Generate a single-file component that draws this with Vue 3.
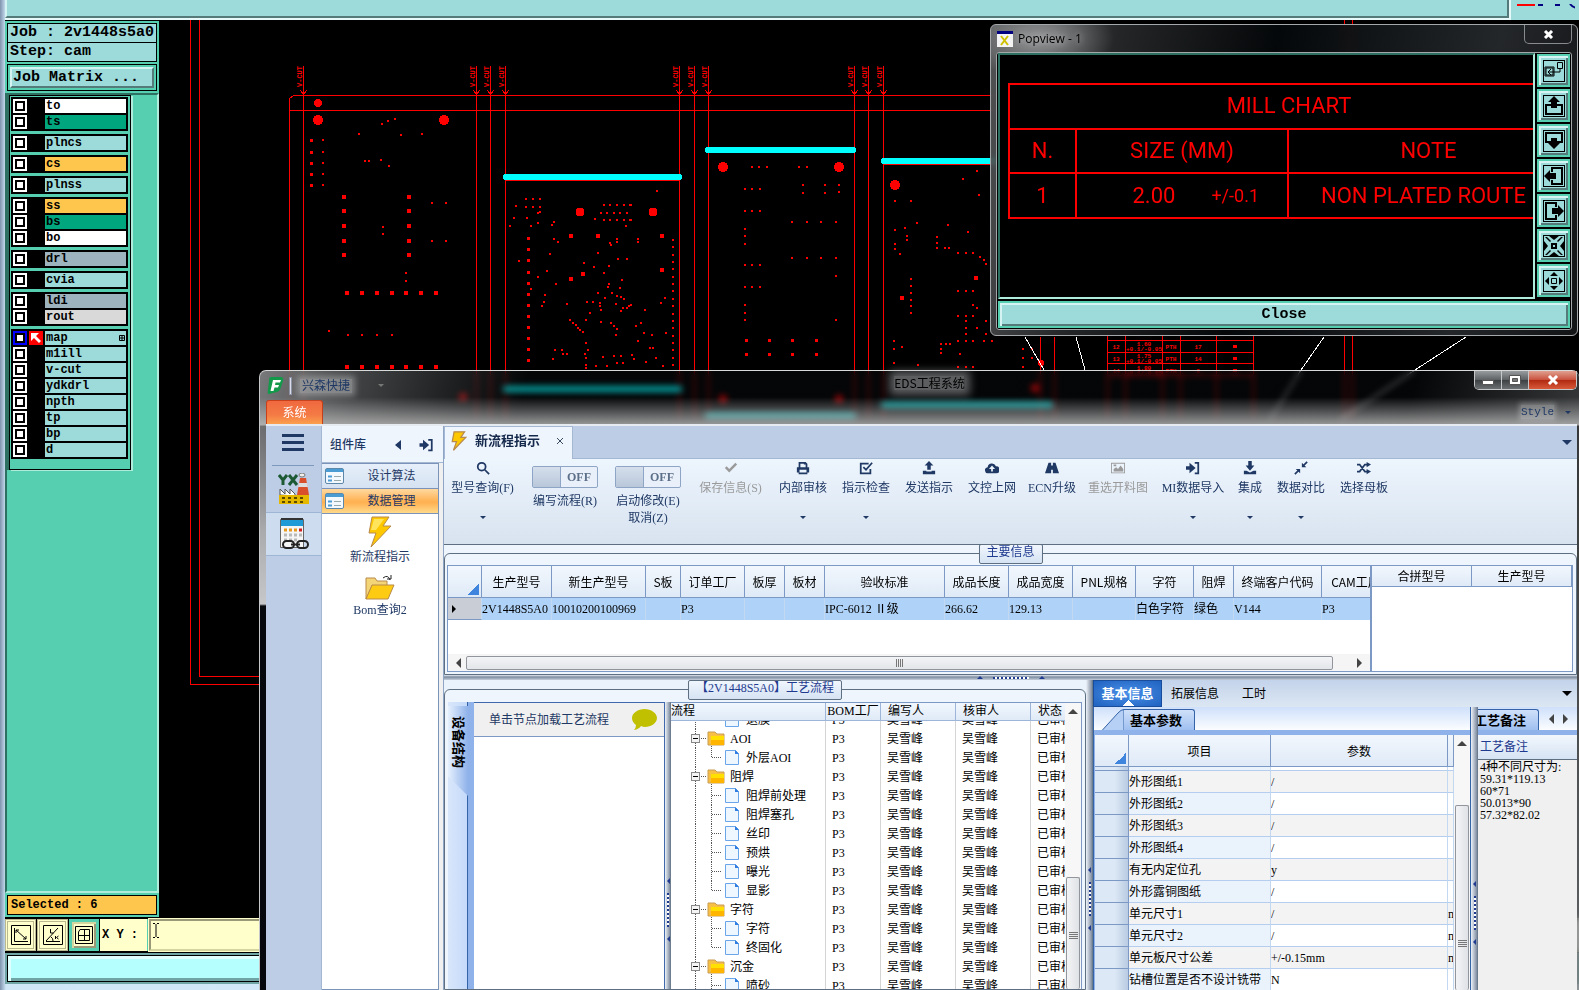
<template>
  <div class="desktop">
    <!-- CAM 主程序 -->
    <div class="cam">
      <div class="camTop">
        <div class="camTopBar"></div>
        <div class="camLogo">
          <svg width="64" height="8">
            <path d="M6 0h18v2H6z" fill="#f00" />
            <path d="M27 0h5v2h-5zM44 0h5v2h-5z" fill="#000080" />
            <path d="M59 0q3 4 9 4" fill="none" stroke="#000080" stroke-width="2" />
          </svg>
        </div>
      </div>

      <div class="camMain">
        <div class="side">
          <div class="sideHead">
            <div class="infoBox">Job : 2v1448s5a0</div>
            <div class="infoBox">Step: cam</div>
            <div class="matrixBox"><button>Job Matrix ...</button></div>
          </div>
          <div class="sideBody">
            <div class="layerPanel">
              <div class="layerGroup" v-for="(group, gi) in layers" :key="gi">
                <div class="layerRow" v-for="item in group" :key="item.name">
                  <input
                    type="checkbox"
                    :id="'layer-' + item.name"
                    :class="{ active: item.active }"
                    v-model="item.show"
                  />
                  <span class="layerMark">
                    <svg v-if="item.active" width="14" height="14">
                      <rect width="14" height="14" fill="#f00" />
                      <path d="M2 2h8l-3 3 5 5-2 2-5-5-3 3z" fill="#fff" />
                    </svg>
                  </span>
                  <label :for="'layer-' + item.name" :class="item.color">
                    {{ item.name }}
                    <svg v-if="item.active" width="6" height="6">
                      <path d="M.5 .5h5v5h-5zM3 0v6M0 3h6" fill="none" stroke="#000" />
                    </svg>
                  </label>
                </div>
              </div>
            </div>
          </div>
          <div class="selected"><div>Selected : 6</div></div>
        </div>

        <!-- 拼板图形 -->
        <div class="canvas">
          <svg class="pcb" shape-rendering="crispEdges">
            <g transform="translate(-159 -20)">
              <g fill="none" stroke="#f00">
                <path d="M190.500 20V684.500H1000M199.500 20V676.500H1000" />
                <path d="M289.500 420V98.500L293.500 95.500H1000M289.500 110.500H1000" />
                <path d="M505 180.500H680M708 152.500H855M883 164.500H1052" />
                <path v-for="x in cutLines" :key="x" :d="`M${x}.5 66V420M${x - 3}.5 90l3 5 3-5`" />
                <path d="M1040.500 337V420M1054.500 337V420M1344.500 20V420M1352.500 20V420" />
                <path d="M1107.500 325V420M1125.500 325V420M1162.500 325V420M1180.500 325V420M1216.500 325V420M1253.500 325V420" />
                <path d="M1107 340.500h147M1107 352.500h147M1107 363.500h147M1107 375.500h147" />
              </g>
              <g class="cutText">
                <text v-for="x in cutLines" :key="x" :transform="`translate(${x - 1} 87) rotate(-90)`">V-CUT</text>
              </g>
              <g class="drillText">
                <template v-for="(row, i) in drillRows" :key="i">
                  <text :x="1116" :y="349 + i * 12">{{ row[0] }}</text>
                  <text :x="1144" :y="346 + i * 12">{{ row[1] }}</text>
                  <text :x="1144" :y="351 + i * 12">+0.1/-0.05</text>
                  <text :x="1171" :y="349 + i * 12">PTH</text>
                  <text :x="1198" :y="349 + i * 12">{{ row[2] }}</text>
                  <rect :x="1233" :y="345 + i * 12" width="4" height="3" />
                </template>
              </g>
              <g stroke="#0ff" stroke-linecap="round">
                <path d="M506 177H679M708 150H853M884 161H1050" stroke-width="6" />
                <path d="M506 389H679M708 416H853M884 405H1050" stroke-width="6" />
              </g>
              <g fill="#f00">
                <circle v-for="(c, i) in bigPads" :key="'b' + i" :cx="c[0]" :cy="c[1]" :r="c[2]" />
                <path :d="midPath" />
                <path :d="smallPath" />
              </g>
              <path
                d="M1025 337L1044 370M1076 337L1085 370M1324 337L1301 370L1270 420M1466 337L1415 370L1340 420"
                fill="none"
                stroke="#fff"
              />
            </g>
          </svg>
        </div>
      </div>

      <div class="camTools">
        <button class="camTool">
          <svg width="20" height="20" fill="none" stroke="#000">
            <path d="M.5 .5h19v19H.5zM3.500 3v13.500H17M5 5l10 9M5 8V5h3M15 11v3h-3" />
          </svg>
        </button>
        <button class="camTool">
          <svg width="20" height="20" fill="none" stroke="#000">
            <path d="M.5 .5h19v19H.5zM3 16.500h14M3 16L15 3M7.500 4v4h3M8 12q2 1 2 4M12.500 11v3M15.500 11l-2 1.500 2 1.500" />
          </svg>
        </button>
        <button class="camTool on">
          <svg width="18" height="18" fill="none" stroke="#000">
            <path d="M.5 .5h17v17H.5zM5 3.500h9.500v11h-11V6zM9.500 3v12M3 9.500h12" />
          </svg>
        </button>
        <label class="xyLabel" for="xy">X Y :</label>
        <div class="xyBox">
          <input id="xy" type="text" />
          <svg width="6" height="16"><path d="M0 .5h2M4 .5h2M0 14.500h2M4 14.500h2M3 1v13" stroke="#000" /></svg>
        </div>
      </div>
      <div class="camMsg"><div></div></div>
    </div>

    <!-- Popview 窗口 -->
    <div class="popview">
      <div class="popTitle">
        <svg width="16" height="16">
          <rect width="16" height="16" fill="#f4f4f4" />
          <rect width="16" height="3" fill="#000080" />
          <path d="M4 5l7 9M11 5l-7 9" stroke="#cfc000" stroke-width="2" />
        </svg>
        <span>Popview - 1</span>
        <button aria-label="Close window">
          <svg width="11" height="9"><path d="M2 1l7 7M9 1L2 8" stroke="#fff" stroke-width="3" /></svg>
        </button>
      </div>
      <div class="popBody">
        <div class="popMain">
          <div class="popCanvas">
            <table>
              <colgroup><col class="cNo" /><col class="cSize" /><col /></colgroup>
              <tbody>
                <tr><th colspan="3">MILL CHART</th></tr>
                <tr><th>N.</th><th>SIZE (MM)</th><th>NOTE</th></tr>
                <tr>
                  <td>1</td>
                  <td><div class="sizeCell">2.00<small>+/-0.1</small></div></td>
                  <td class="note">NON PLATED ROUTE</td>
                </tr>
              </tbody>
            </table>
          </div>
          <div class="popTools">
            <button v-for="(ico, i) in popIcons" :key="i" :aria-label="ico.name">
              <svg width="22" height="22" viewBox="0 0 22 22">
                <rect x=".5" y=".5" width="21" height="21" fill="none" stroke="#000" />
                <path :d="ico.line" fill="none" stroke="#000" :stroke-width="ico.w" />
                <path :d="ico.fill" />
              </svg>
            </button>
          </div>
        </div>
        <button class="popClose">Close</button>
      </div>
    </div>

    <!-- EDS 工程系统 -->
    <div class="eds">
      <div class="edsTitle">
        <svg class="edsLogo" width="18" height="18">
          <path d="M4 0h10q3 0 2 4l-2 6q-1 4-4 5l-8 2q-2 0-1-4l1-9q0-4 2-4z" fill="#12994a" />
          <path d="M6 3h8l-1 2.500H8.500L8 8h4l-1 2.500H7.500L6.500 14H3.500z" fill="#fff" />
        </svg>
        <i class="titleLine"></i>
        <span class="company">兴森快捷</span>
        <i class="caret dim"></i>
        <span class="edsName">EDS工程系统</span>
        <div class="winBtns">
          <button aria-label="最小化"><svg width="12" height="10"><path d="M.5 5.500h11v4H.5z" fill="#fff" stroke="#555" /></svg></button>
          <button aria-label="最大化">
            <svg width="12" height="10"><path d="M.5 .5h11v9H.5z" fill="#fff" stroke="#555" /><path d="M3.500 3.500h5v3h-5z" fill="#777" stroke="#555" /></svg>
          </button>
          <button class="red" aria-label="关闭"><svg width="12" height="10"><path d="M2 1l8 8M10 1L2 9" stroke="#fff" stroke-width="3" /></svg></button>
        </div>
      </div>
      <div class="ribbonTabs">
        <button class="sysTab">系统</button>
        <span class="styleBtn"><span>Style</span><i class="caret"></i></span>
      </div>

      <div class="edsBody">
        <div class="rail">
          <button class="menuBtn" aria-label="菜单"><i></i><i></i><i></i></button>
          <button class="railBtn" aria-label="工厂">
            <svg width="32" height="32" viewBox="0 0 32 32">
              <path d="M1 2l4 5v5M9 2L5 7M11 2l8 10M19 2l-8 10" fill="none" stroke="#1d5a34" stroke-width="3" />
              <path d="M22 5h6l3 17H19z" fill="#d94f2b" />
              <path d="M21 10h8l1 4H20z" fill="#ddd" />
              <ellipse cx="24" cy="2" rx="3" ry="2" fill="#eee" stroke="#777" />
              <path d="M2 22v-6l5 5v-5l5 5v-5l5 5v2z" fill="#fff" stroke="#555" />
              <path d="M1 22h30v9H1z" fill="#e5b800" />
              <path d="M4 25h3M10 25h3M16 25h3M22 25h3M4 29h3M10 29h3M16 29h3M22 29h3" stroke="#5d4a00" stroke-width="2" />
            </svg>
          </button>
          <button class="railBtn light" aria-label="计算器">
            <svg width="30" height="32" viewBox="0 0 30 32">
              <path d="M1.500 1.500h23v28h-23z" fill="#f5f5f5" stroke="#666" />
              <path d="M2 2h22v6H2z" fill="#1f9ad6" /><path d="M2 1h22" stroke="#333" stroke-width="2" />
              <path d="M5 12h3M10 12h3M15 12h3" stroke="#e89a20" stroke-width="3" />
              <path d="M20 12h3" stroke="#d02020" stroke-width="3" />
              <path d="M5 17h3M10 17h3M15 17h3M20 17h3M5 22h3M10 22h3M15 22h3" stroke="#b9b9b9" stroke-width="3" />
              <g fill="none" stroke="#222" stroke-width="2">
                <rect x="4" y="23" width="11" height="7" rx="3.500" /><rect x="18" y="23" width="11" height="7" rx="3.500" /><path d="M12 26.500h9" />
              </g>
            </svg>
          </button>
        </div>

        <div class="lib">
          <div class="libHead">
            <span>组件库</span>
            <svg width="6" height="10"><path d="M6 0v10L0 5z" /></svg>
            <svg width="15" height="14" viewBox="0 0 16 16"><path :d="icons.signin.fill" /><path :d="icons.signin.line" fill="none" stroke="#1f3864" stroke-width="2" /></svg>
          </div>
          <div class="libList">
            <button class="libCate" v-for="c in cates" :key="c.name" :class="{ cur: c.cur }">
              <svg width="20" height="17">
                <rect x=".5" y=".5" width="18" height="15" rx="1.500" fill="#f4f9ff" stroke="#5d87a8" />
                <path d="M1 2.500h17" stroke="#4b9cd3" stroke-width="3" />
                <path d="M3 8.500h4M3 12.500h4" stroke="#4b9cd3" stroke-width="2" /><path d="M9 8.500h7M9 12.500h7" stroke="#9aa" />
              </svg>
              <span>{{ c.name }}</span>
            </button>
            <button class="libItem">
              <svg width="26" height="32" viewBox="0 0 26 32">
                <path d="M5 1h17l-6 9h8L4 31l5-14H2z" fill="#fdc800" stroke="#b98a4a" />
                <path d="M7 3h10l-8 11H4z" fill="#ffe45c" />
              </svg>
              <span>新流程指示</span>
            </button>
            <button class="libItem">
              <svg width="30" height="26" viewBox="0 0 30 26">
                <path d="M1 24V3h9l2 3h10v5H7z" fill="#f3d476" stroke="#b98a4a" />
                <path d="M7 10h22l-6 14H1z" fill="#fccb12" stroke="#b98a4a" />
                <path d="M18 3q5-4 7 2M22 4h4V0" fill="none" stroke="#222" />
              </svg>
              <span>Bom查询2</span>
            </button>
          </div>
        </div>

        <div class="work">
          <div class="docTabs">
            <div class="docTab">
              <svg width="16" height="20" viewBox="0 0 26 32"><path d="M5 1h17l-6 9h8L4 31l5-14H2z" fill="#fdc800" stroke="#b98a4a" stroke-width="2" /></svg>
              <b>新流程指示</b>
              <button aria-label="关闭标签"><svg width="8" height="8"><path d="M1 1l6 6M7 1L1 7" stroke="#3b4a63" /></svg></button>
            </div>
            <i class="caret big"></i>
          </div>

          <div class="toolbar">
            <template v-for="t in tools" :key="t.text">
              <div v-if="t.toggle" class="switchBox">
                <button class="switch"><i></i><b>OFF</b></button>
                <span>{{ t.text }}</span>
                <span v-if="t.sub">{{ t.sub }}</span>
              </div>
              <button v-else class="tool" :class="[t.size, { off: t.off }]">
                <svg width="14" height="14" viewBox="0 0 16 16">
                  <path :d="icons[t.icon].fill" fill-rule="evenodd" />
                  <path :d="icons[t.icon].line" class="line" />
                </svg>
                <span>{{ t.text }}</span>
                <i v-if="t.drop" class="caret"></i>
              </button>
            </template>
          </div>

          <!-- 主要信息 -->
          <div class="group topGroup">
            <div class="caption">主要信息</div>
            <div class="mainGrid">
              <div class="gridClip">
                <table class="grid">
                  <colgroup>
                    <col class="cMark" />
                    <col v-for="c in mainCols" :key="c.name" :style="{ width: c.width + 'px' }" />
                  </colgroup>
                  <thead>
                    <tr>
                      <th class="corner"></th>
                      <th v-for="c in mainCols" :key="c.name">{{ c.name }}</th>
                    </tr>
                  </thead>
                  <tbody>
                    <tr>
                      <td class="mark"><i></i></td>
                      <td v-for="c in mainCols" :key="c.name">{{ c.value }}</td>
                    </tr>
                  </tbody>
                </table>
              </div>
              <div class="hScroll">
                <i class="arrow left"></i>
                <div class="thumb"><i></i></div>
                <i class="arrow right"></i>
              </div>
            </div>
            <div class="mergeGrid">
              <table class="grid small">
                <thead><tr><th>合拼型号</th><th>生产型号</th></tr></thead>
              </table>
            </div>
          </div>

          <div class="hSplit"><i class="up"></i><i class="grip"></i><i class="up"></i></div>

          <div class="lower">
            <!-- 工艺流程 -->
            <div class="group flowGroup">
              <div class="caption">【2V1448S5A0】工艺流程</div>
              <div class="sideTab"><span>设备结构</span></div>
              <div class="nodePanel">
                <div class="nodeHead">
                  <span>单击节点加载工艺流程</span>
                  <svg width="25" height="21">
                    <path d="M12.500 0C19 0 25 4 25 9s-6 9-12 9q-2 0-4-1-2 3-7 4 2-2 2-5Q0 13 0 9c0-5 6-9 12.500-9z" fill="#c0c000" />
                  </svg>
                </div>
              </div>
              <div class="vSplit thin"><i class="lt"></i><i class="vgrip"></i><i class="lt"></i></div>
              <div class="treeBox">
                <div class="treeMain">
                  <table class="tree treeTop">
                    <colgroup><col class="t1" /><col class="t2" /><col class="t3" /><col class="t3" /><col /></colgroup>
                    <thead><tr><th>流程</th><th>BOM工厂</th><th>编写人</th><th>核审人</th><th>状态</th></tr></thead>
                  </table>
                  <div class="treeClip">
                    <table class="tree treeRows">
                      <colgroup><col class="t1" /><col class="t2" /><col class="t3" /><col class="t3" /><col /></colgroup>
                      <tbody>
                        <tr v-for="(n, i) in nodes" :key="i">
                          <td>
                            <div class="node">
                              <svg v-if="n.dir" width="56" height="19">
                                <path d="M24.500 0V19M30 9.500h5" class="dot" />
                                <path d="M40.500 17v2" class="dot" />
                                <rect x="20.500" y="5.500" width="8" height="8" fill="#f4f4f4" stroke="#888" />
                                <path d="M22 9.500h5" stroke="#000" />
                                <path d="M37 3h7l2 2h7v11H37z" fill="#f7c044" stroke="#c99c55" />
                                <path d="M40 7h13v9H40z" fill="#ffb400" /><path d="M40 7h13v4H40z" fill="#ffe000" />
                              </svg>
                              <svg v-else width="72" height="19">
                                <path d="M24.500 0V19M41 9.500h9" class="dot" />
                                <path :d="n.last ? 'M40.500 0V10' : 'M40.500 0V19'" class="dot" />
                                <path d="M54.500 2.500h10l3 3v11h-13z" fill="#eef6ff" stroke="#6aa5ea" />
                                <path d="M64 2l4 4h-4z" fill="#2f7de0" />
                              </svg>
                              <span>{{ n.name }}</span>
                            </div>
                          </td>
                          <td>P3</td>
                          <td>吴雪峰</td>
                          <td>吴雪峰</td>
                          <td>已审核</td>
                        </tr>
                      </tbody>
                    </table>
                  </div>
                </div>
                <div class="vScroll tall"><i class="arrow top"></i><div class="thumb"><i></i></div></div>
              </div>
            </div>

            <div class="vSplit"><i class="lt"></i><i class="vgrip"></i><i class="lt"></i></div>

            <!-- 基本信息 -->
            <div class="info">
              <div class="infoTabs">
                <button class="cur">基本信息</button>
                <button>拓展信息</button>
                <button>工时</button>
                <i class="caret big black"></i>
              </div>
              <div class="infoBody">
                <div class="params">
                  <div class="subTabs">
                    <svg width="26" height="22"><path d="M0 21.500h4L20 4q3-3.500 6-3.500V22H0z" fill="#b5cff5" stroke="#3563a8" /></svg>
                    <button>基本参数</button>
                  </div>
                  <div class="paramGrid">
                    <div class="paramMain">
                      <table class="grid pHead">
                        <colgroup><col class="p0" /><col class="p1" /><col class="p2" /><col /></colgroup>
                        <thead><tr><th class="corner"></th><th>项目</th><th>参数</th><th></th></tr></thead>
                      </table>
                      <table class="grid pRows">
                        <colgroup><col class="p0" /><col class="p1" /><col class="p2" /><col /></colgroup>
                        <tbody>
                          <tr v-for="(p, i) in params" :key="i">
                            <td></td>
                            <td>{{ p[0] }}</td>
                            <td>{{ p[1] }}</td>
                            <td>{{ p[2] }}</td>
                          </tr>
                        </tbody>
                      </table>
                    </div>
                    <div class="vScroll"><i class="arrow top"></i><div class="thumb"><i></i></div></div>
                  </div>
                </div>
                <div class="vSplit"><i class="lt"></i><i class="vgrip"></i><i class="lt"></i></div>
                <div class="remark">
                  <div class="subTabs">
                    <button class="cut"><span>工艺备注</span></button>
                    <i class="arrow left"></i>
                    <i class="arrow right"></i>
                  </div>
                  <label class="remarkHead" for="remark">工艺备注</label>
                  <textarea id="remark" v-model="remark"></textarea>
                </div>
              </div>
            </div>
          </div>
        </div>
      </div>
    </div>
  </div>
</template>

<script setup>
import { computed, reactive, ref } from 'vue'

// 图层列表
const layers = reactive([
  [
    { name: 'to', color: 'white' },
    { name: 'ts', color: 'green' }
  ],
  [{ name: 'plncs', color: 'cyan' }],
  [{ name: 'cs', color: 'orange' }],
  [{ name: 'plnss', color: 'cyan' }],
  [
    { name: 'ss', color: 'orange' },
    { name: 'bs', color: 'green' },
    { name: 'bo', color: 'white' }
  ],
  [{ name: 'drl', color: 'slate' }],
  [{ name: 'cvia', color: 'cyan' }],
  [
    { name: 'ldi', color: 'slate' },
    { name: 'rout', color: 'gray' }
  ],
  [
    { name: 'map', color: 'cyan', active: true },
    { name: 'm1ill', color: 'cyan' },
    { name: 'v-cut', color: 'cyan' },
    { name: 'ydkdrl', color: 'cyan' },
    { name: 'npth', color: 'cyan' },
    { name: 'tp', color: 'cyan' },
    { name: 'bp', color: 'cyan' },
    { name: 'd', color: 'cyan' }
  ]
])

// V-CUT 线位置
const cutLines = [303, 476, 490, 505, 679, 694, 708, 854, 868, 883]

const drillRows = [
  ['12', '1.60', '17'],
  ['13', '1.75', '14'],
  ['14', '1.80', '8']
]

// 大孔 x, y, 半径
const bigPads = [
  [318, 103, 4], [318, 120, 5], [444, 120, 5], [580, 212, 4.5], [653, 212, 4.5],
  [723, 167, 5], [839, 167, 5], [895, 185, 5], [1041, 363, 3],
  [463, 397, 4], [723, 399, 4], [839, 399, 4], [1035, 388, 4]
]

// 中孔
const midPads = [
  [344, 197], [344, 211], [344, 226], [344, 241], [344, 255],
  [409, 197], [409, 211], [409, 226], [409, 241], [409, 255],
  [347, 293], [362, 293], [377, 293], [392, 293], [406, 293], [421, 293], [436, 293],
  [347, 367], [362, 367], [377, 367], [392, 367], [406, 367], [421, 367], [436, 367],
  [571, 236], [598, 236], [583, 274], [571, 279], [662, 236], [662, 270],
  [976, 278], [902, 298]
]

// 带焊盘的孔
const padDots = [
  [311, 140], [311, 152], [311, 163], [311, 174], [311, 185],
  [746, 340], [769, 340], [792, 340], [816, 340],
  [746, 354], [769, 354], [792, 354], [816, 354],
  [528, 238], [528, 249], [528, 260], [528, 272], [528, 283], [528, 294],
  [528, 305], [528, 316], [528, 327], [528, 338], [528, 349], [528, 360]
]

// 小孔, 以板左上角为原点, 单位 1/3 像素
const leftDots = [
  [267, 252], [336, 222], [354, 213], [375, 207], [393, 255], [456, 252], [158, 271], [158, 306], [158, 339],
  [158, 372], [158, 405], [285, 333], [297, 333], [333, 330], [357, 348], [339, 531], [339, 552], [486, 459],
  [528, 459], [486, 573], [528, 573], [408, 669], [408, 693], [177, 843], [234, 855], [276, 855], [321, 855],
  [366, 855], [768, 447], [789, 447], [810, 447], [738, 468], [768, 471], [789, 471], [810, 471], [804, 489],
  [810, 486], [732, 504], [771, 504], [804, 519], [720, 528], [783, 528], [852, 516], [846, 525], [852, 567],
  [864, 576], [840, 612], [747, 633], [831, 663], [804, 681], [858, 702], [783, 717], [825, 735], [822, 756],
  [816, 768], [891, 762], [1002, 465], [1021, 465], [1041, 465], [1062, 465], [1081, 465], [992, 488],
  [1010, 488], [1032, 488], [1051, 488], [1071, 488], [1002, 510], [1021, 510], [1041, 510], [1062, 510],
  [1081, 510], [975, 507], [1068, 528], [1020, 579], [1023, 585], [1041, 567], [1041, 576], [1104, 567],
  [1104, 576], [984, 609], [942, 639], [972, 651], [1017, 648], [1044, 627], [1071, 627], [1002, 669],
  [1056, 690], [1017, 702], [1014, 711], [1050, 714], [1026, 729], [984, 729], [1005, 744], [1041, 738],
  [1053, 741], [1062, 747], [951, 756], [969, 756], [990, 759], [990, 768], [993, 780], [1038, 762],
  [1059, 774], [1071, 774], [1077, 768], [1083, 765], [1053, 783], [960, 789], [948, 810], [900, 810],
  [909, 819], [918, 825], [924, 834], [930, 840], [939, 846], [993, 816], [1023, 819], [1032, 828],
  [1041, 837], [1098, 828], [1038, 855], [948, 879], [1104, 873], [855, 900], [876, 900], [879, 912],
  [891, 912], [849, 927], [954, 900], [945, 912], [948, 924], [948, 945], [948, 954], [999, 921], [1032, 918],
  [1053, 918], [1086, 915], [1092, 927], [1041, 939], [1059, 939], [978, 948], [1011, 948]
]
const rightDots = [
  [81, 423], [3, 464], [3, 510], [24, 567], [24, 576], [129, 570], [129, 591], [129, 615], [129, 636],
  [129, 657], [129, 681], [129, 702], [129, 723], [129, 747], [129, 768], [129, 792], [129, 813], [129, 834],
  [129, 858], [129, 879], [129, 900], [129, 924], [129, 945], [105, 744], [93, 759], [3, 765], [45, 780],
  [33, 819], [18, 828], [42, 849], [66, 855], [108, 849], [24, 873], [60, 894], [69, 894], [6, 915], [12, 927],
  [78, 924], [48, 936], [99, 948], [366, 351], [387, 351], [411, 351], [507, 351], [531, 351], [345, 417],
  [366, 417], [390, 417], [519, 405], [519, 429], [585, 405], [585, 429], [627, 405], [627, 426], [345, 483],
  [366, 483], [390, 483], [486, 516], [531, 516], [573, 516], [618, 516], [345, 537], [345, 558], [345, 582],
  [486, 624], [531, 624], [573, 624], [618, 624], [345, 645], [366, 645], [390, 645], [618, 678], [345, 711],
  [366, 711], [390, 711], [345, 765], [345, 789], [345, 810], [618, 810], [1041, 363], [999, 387], [1047, 435],
  [795, 453], [843, 453], [861, 519], [954, 525], [825, 534], [795, 540], [1014, 546], [831, 558], [831, 570],
  [921, 561], [921, 579], [921, 594], [945, 594], [957, 594], [795, 582], [795, 597], [810, 612], [985, 608],
  [1008, 608], [1030, 608], [1050, 621], [1062, 630], [1068, 642], [843, 687], [843, 708], [843, 729],
  [843, 750], [843, 768], [843, 789], [984, 723], [1008, 723], [1029, 723], [1029, 765], [1041, 774],
  [984, 798], [1008, 798], [1029, 798], [1008, 813], [1008, 834], [1008, 852], [1041, 834], [1068, 813],
  [1068, 852], [792, 873], [792, 897], [816, 891], [933, 882], [948, 882], [960, 882], [933, 897], [933, 909],
  [984, 873], [1008, 873], [1029, 873], [1062, 873], [1086, 873], [990, 912], [792, 939], [864, 945],
  [984, 951], [1008, 951], [1029, 951], [1180, 897], [1205, 897], [1180, 925], [1205, 925], [1180, 951]
]

function toPath(list, ox, oy, scale, size) {
  return list
    .map(([x, y]) => {
      let px = Math.round(ox + x / scale - size / 2)
      let py = Math.round(oy + y / scale - size / 2)
      return `M${px} ${py}h${size}v${size}h${-size}z`
    })
    .join('')
}

const midPath = computed(() => toPath(midPads, 0, 0, 1, 4) + toPath(padDots, 0, 0, 1, 3))
const smallPath = computed(() => toPath(leftDots, 270, 50, 3, 2) + toPath(rightDots, 630, 50, 3, 2))

// Popview 右侧按钮
const popIcons = [
  { name: 'zoom', w: 1, line: 'M2 7h9v9H2zM3 8h7v7H3zM14.500 2.500h5v6h-5zM17 8v4H5M8 9l-3 3 3 3', fill: '' },
  { name: 'up', w: 2, line: 'M8 10H3v9h16v-9h-5', fill: 'M11 1l6 6h-3v6H8V7H5z' },
  { name: 'down', w: 2, line: 'M8 12H3V3h16v9h-5', fill: 'M11 19l6-6h-3V8H8v5H5z' },
  { name: 'left', w: 2, line: 'M9 7V3h10v16H9v-4', fill: 'M1 11l6-6v3h6v6H7v3z' },
  { name: 'right', w: 2, line: 'M13 7V3H3v16h10v-4', fill: 'M21 11l-6-6v3H9v6h6v3z' },
  { name: 'zoom in', w: 2, line: 'M9 9h4v4H9z', fill: 'M6 1h10l-5 4zM6 21h10l-5-4zM1 6v10l4-5zM21 6v10l-4-5zM2 2h2l4 4-1 1zM20 2h-2l-4 4 1 1zM2 20h2l4-4-1-1zM20 20h-2l-4-4 1-1z' },
  { name: 'zoom out', w: 1, line: 'M8.500 8.500h5v5h-5z', fill: 'M11 2l4 4H7zM11 20l4-4H7zM2 11l4-4v8zM20 11l-4-4v8z' }
]

const icons = {
  search: { fill: '', line: 'M11 6.500a4.500 4.500 0 1 1-9 0a4.500 4.500 0 1 1 9 0M10 10l5 5' },
  check: { fill: 'M1 8l2-2 3 3 7-7 2 2-9 9z', line: '' },
  print: { fill: 'M3 1h8l2 2v4h2v6h-2v2H3v-2H1V7h2zM5 3v4h6V4H9V3zM4 10v3h8v-3z', line: '' },
  tick: { fill: '', line: 'M13 9v5H2V3h9M5 7l3 3 7-8' },
  upload: { fill: 'M8 0l5 5h-3v5H6V5H3zM1 11h4v1h6v-1h4v4H1z', line: '' },
  cloud: { fill: 'M4 14a3.500 3.500 0 0 1-1-7A5 5 0 0 1 12.500 6a4 4 0 0 1 .5 8zM8 5L4.500 9H7v3h2V9h2.500z', line: '' },
  road: { fill: 'M4 2h3v3h2V2h3l4 12H9v-4H7v4H0z', line: '' },
  image: { fill: 'M0 2h16v12H0zM1 3v10h14V3zM3 12V9l3-2 2 2 3-4 3 4v3zM3 4h3v2H3z', line: '' },
  signin: { fill: 'M0 6h4V2l7 6-7 6v-4H0z', line: 'M10 2h4v12h-4' },
  download: { fill: 'M6 0h4v5h3l-5 6-5-6h3zM1 11h3l4 2 4-2h3v4H1z', line: '' },
  compress: { fill: 'M9 2v5h5zM7 14V9H2z', line: 'M15 1l-5 5M1 15l5-5' },
  shuffle: { fill: 'M11 1l5 3-5 3zM11 9l5 3-5 3z', line: 'M0 4h3l6 8h3M0 12h3l6-8h3' }
}

const cates = [{ name: '设计算法' }, { name: '数据管理', cur: true }]

// 工具栏
const tools = [
  { text: '型号查询(F)', icon: 'search', size: 'xl', drop: true },
  { text: '编写流程(R)', toggle: true },
  { text: '启动修改(E)', sub: '取消(Z)', toggle: true },
  { text: '保存信息(S)', icon: 'check', size: 'xl', off: true },
  { text: '内部审核', icon: 'print', size: 'm', drop: true },
  { text: '指示检查', icon: 'tick', size: 'm', drop: true },
  { text: '发送指示', icon: 'upload', size: 'm' },
  { text: '文控上网', icon: 'cloud', size: 'm' },
  { text: 'ECN升级', icon: 'road', size: 's' },
  { text: '重选开料图', icon: 'image', size: 'l', off: true },
  { text: 'MI数据导入', icon: 'signin', size: 'l', drop: true },
  { text: '集成', icon: 'download', size: 'xs', drop: true },
  { text: '数据对比', icon: 'compress', size: 'm', drop: true },
  { text: '选择母板', icon: 'shuffle', size: 'm' }
]

const mainCols = [
  { name: '生产型号', width: 70, value: '2V1448S5A0' },
  { name: '新生产型号', width: 94, value: '10010200100969' },
  { name: 'S板', width: 35, value: '' },
  { name: '订单工厂', width: 64, value: 'P3' },
  { name: '板厚', width: 40, value: '' },
  { name: '板材', width: 40, value: '' },
  { name: '验收标准', width: 120, value: 'IPC-6012 Ⅱ级' },
  { name: '成品长度', width: 64, value: '266.62' },
  { name: '成品宽度', width: 64, value: '129.13' },
  { name: 'PNL规格', width: 63, value: '' },
  { name: '字符', width: 58, value: '白色字符' },
  { name: '阻焊', width: 40, value: '绿色' },
  { name: '终端客户代码', width: 88, value: 'V144' },
  { name: 'CAM工厂', width: 68, value: 'P3' }
]

const nodes = [
  { name: '退膜', last: true },
  { name: 'AOI', dir: true },
  { name: '外层AOI', last: true },
  { name: '阻焊', dir: true },
  { name: '阻焊前处理' },
  { name: '阻焊塞孔' },
  { name: '丝印' },
  { name: '预烘' },
  { name: '曝光' },
  { name: '显影', last: true },
  { name: '字符', dir: true },
  { name: '字符' },
  { name: '终固化', last: true },
  { name: '沉金', dir: true },
  { name: '喷砂' }
]

const params = [
  ['', '', ''],
  ['外形图纸1', '/', ''],
  ['外形图纸2', '/', ''],
  ['外形图纸3', '/', ''],
  ['外形图纸4', '/', ''],
  ['有无内定位孔', 'y', ''],
  ['外形露铜图纸', '/', ''],
  ['单元尺寸1', '/', 'mm'],
  ['单元尺寸2', '/', 'mm'],
  ['单元板尺寸公差', '+/-0.15mm', 'mm'],
  ['钻槽位置是否不设计铣带', 'N', '']
]

const remark = ref('4种不同尺寸为:\n59.31*119.13\n60*71\n50.013*90\n57.32*82.02')
</script>

<style>
body {
  overflow: hidden;
}
</style>

<style scoped>
* {
  box-sizing: border-box;
}
button,
input,
textarea {
  margin: 0;
  padding: 0;
  border: none;
  background: none;
  font: inherit;
  color: inherit;
  outline: none;
}
svg {
  flex: none;
}
.desktop {
  position: relative;
  height: 100vh;
  overflow: hidden;
  background: linear-gradient(90deg, #7f93ad, #cfe6f7 6px, #d9f1fb);
  font: 12px/18px 'Liberation Serif', 'Noto Sans CJK SC', serif;
}

/* ---------- CAM ---------- */
.cam {
  height: calc(100% - 6px);
  margin-left: 5px;
  display: flex;
  flex-direction: column;
  background: #000;
  font-family: 'Liberation Mono', monospace;
  font-weight: bold;
}
.camTop {
  height: 20px;
  display: flex;
  gap: 2px;
  background: #e6f8f8;
}
.camTopBar,
.camLogo {
  background: #9ddbdb;
  border-bottom: 2px solid #557a7a;
  margin-bottom: 2px;
}
.camTopBar {
  flex: 1;
  border-left: 2px solid #d5f3f3;
  border-right: 2px solid #557a7a;
}
.camLogo {
  width: 68px;
  margin-bottom: 0;
  border-bottom: none;
}
.camMain {
  flex: 1;
  display: flex;
  min-height: 0;
}
.side {
  width: 154px;
  margin-top: 1px;
  display: flex;
  flex-direction: column;
  background: #56cfb0;
}
.sideHead {
  padding: 2px;
  font-size: 15px;
}
.infoBox {
  height: 20px;
  padding-left: 2px;
  border: 1px solid #000;
  background: #9ddbdb;
  line-height: 18px;
  white-space: nowrap;
}
.infoBox + .infoBox {
  border-top: none;
  height: 19px;
}
.matrixBox {
  margin-top: 2px;
  padding: 2px;
  border: 1px solid #000;
}
.matrixBox button {
  width: 100%;
  height: 21px;
  padding-left: 1px;
  border: 2px solid;
  border-color: #d5f3f3 #557a7a #557a7a #d5f3f3;
  background: #9ddbdb;
  text-align: left;
  line-height: 17px;
}
.sideBody {
  flex: 1;
  padding-left: 2px;
  border: 2px solid;
  border-color: #2d6f60 #b0ecdc #b0ecdc #2d6f60;
  background: #56cfb0;
}
.layerPanel {
  width: 122px;
  height: 375px;
  padding: 1px 2px 0 1px;
  border: 1px solid #000;
  display: flex;
  flex-direction: column;
  gap: 3px;
  box-shadow: 2px 1px #b0ecdc, -2px 0 #2d6f60;
}
.layerGroup {
  padding: 1px;
  background: #000;
}
.layerRow {
  height: 16px;
  padding: 1px;
  display: flex;
  gap: 2px;
}
.layerRow input {
  appearance: none;
  width: 14px;
  height: 14px;
  border: 2px solid #fff;
  background: #fff;
  box-shadow: inset 0 0 0 2px #000;
}
.layerRow input.active {
  border-color: #00f;
}
.layerMark {
  width: 14px;
}
.layerRow label {
  flex: 1;
  padding: 0 1px;
  display: flex;
  justify-content: space-between;
  align-items: center;
  line-height: 14px;
}
.white {
  background: #fff;
}
.green {
  background: #00a67d;
}
.cyan {
  background: #9ddbdb;
}
.orange {
  background: #ffc64d;
}
.slate {
  background: #9db3bd;
}
.gray {
  background: #d9d9d9;
}
.selected {
  padding: 2px;
}
.selected div {
  height: 20px;
  padding-left: 3px;
  border: 1px solid #000;
  background: #ffc64d;
}
.canvas {
  flex: 1;
  overflow: hidden;
}
.pcb {
  display: block;
  width: 100%;
  height: 100%;
}
.cutText {
  fill: #f00;
  font-size: 7px;
}
.drillText {
  fill: #f00;
  font-size: 6px;
  text-anchor: middle;
}
.camTools {
  height: 36px;
  padding: 2px 0;
  display: flex;
  gap: 1px;
}
.camTool {
  width: 31px;
  border: 3px double #b9b88e;
  background: #ffffcc;
  display: flex;
  align-items: center;
  justify-content: center;
}
.camTool.on {
  width: 30px;
  border: 3px solid #56cfb0;
  box-shadow: inset 2px 2px #d5d5a0, inset -2px -2px #9a9a78;
}
.xyLabel {
  width: 48px;
  padding-left: 2px;
  background: #ffffcc;
  border-right: 1px solid #56cfb0;
  line-height: 32px;
  white-space: nowrap;
}
.xyBox {
  flex: 1;
  padding-left: 2px;
  border: 2px solid;
  border-color: #9a9a78 #fff #d5d5a0 #9a9a78;
  outline: 1px solid #ffffcc;
  background: #ffffcc;
  display: flex;
}
.xyBox input {
  order: 1;
  flex: 1;
}
.xyBox svg {
  margin-top: 2px;
}
.camMsg {
  height: 31px;
  padding: 2px;
  background: #6fa5a5;
}
.camMsg div {
  height: 100%;
  border: 1px solid #000;
  background: #b5ffff;
  box-shadow: inset 3px 3px #e0ffff, inset -3px -3px #6fa5a5;
}

/* ---------- Popview ---------- */
.popview {
  position: absolute;
  top: 24px;
  right: 1px;
  width: 588px;
  padding: 0 5px 5px;
  border: 1px solid #a5a8aa;
  border-radius: 6px;
  background:
    radial-gradient(ellipse at 48px 13px, rgba(170, 172, 174, 0.8), transparent 75px),
    linear-gradient(100deg, rgba(90, 92, 94, 0.9), rgba(40, 42, 44, 0.9) 20%, rgba(5, 8, 10, 0.9) 45%, rgba(40, 43, 46, 0.9) 80%, rgba(20, 22, 24, 0.9));
  backdrop-filter: blur(4px);
}
.popTitle {
  height: 27px;
  padding-left: 1px;
  display: flex;
  align-items: center;
  gap: 5px;
}
.popTitle span {
  flex: 1;
  font: 12px/18px 'Open Sans', 'Noto Sans', sans-serif;
  color: #000;
  text-shadow: 0 0 6px #bbb, 0 0 10px #999;
}
.popTitle button {
  align-self: flex-start;
  width: 48px;
  height: 19px;
  border: 1px solid #888b8e;
  border-top: none;
  border-radius: 0 0 5px 5px;
  display: flex;
  align-items: center;
  justify-content: center;
}
.popBody {
  padding: 0 1px 1px;
  border: 1px solid #a5a8aa;
  border-radius: 3px;
  background: #000;
}
.popMain {
  display: flex;
  gap: 2px;
  height: 246px;
}
.popCanvas {
  flex: 1;
  overflow: hidden;
  padding: 28px 0 0 8px;
  border: 2px solid;
  border-color: #2d6f60 #b0ecdc #b0ecdc #2d6f60;
}
.popCanvas table {
  width: 562px;
  height: 136px;
  table-layout: fixed;
  border-collapse: collapse;
  color: #f00;
  font: 22px/24px Roboto, sans-serif;
}
.popCanvas th,
.popCanvas td {
  padding: 0;
  border: 2px solid #f00;
  font-weight: 400;
  text-align: center;
  white-space: nowrap;
}
.cNo {
  width: 67px;
}
.cSize {
  width: 212px;
}
.sizeCell {
  display: flex;
  justify-content: flex-end;
  align-items: center;
  gap: 36px;
  padding-right: 28px;
}
.sizeCell small {
  font-size: 18px;
}
.popCanvas td.note {
  padding-left: 32px;
  text-align: left;
}
.popTools {
  padding-top: 1px;
  display: flex;
  flex-direction: column;
  gap: 2px;
}
.popTools button {
  width: 33px;
  height: 33px;
  border: 2px solid #56cfb0;
  background: #9ddbdb;
  box-shadow: inset 2px 2px #d5f3f3, inset -2px -2px #557a7a;
  display: flex;
  align-items: center;
  justify-content: center;
}
.popClose {
  display: block;
  width: 100%;
  height: 27px;
  margin-top: 2px;
  border: 2px solid #56cfb0;
  background: #9ddbdb;
  box-shadow: inset 2px 2px #d5f3f3, inset -2px -2px #557a7a;
  font: bold 15px/20px 'Liberation Mono', monospace;
}

/* ---------- EDS 窗口 ---------- */
.eds {
  position: absolute;
  left: 259px;
  top: 370px;
  right: 0;
  bottom: 0;
  padding: 0 2px 0 6px;
  border-top: 1px solid #d8dada;
  border-left: 1px solid #c5c7c9;
  border-radius: 7px 7px 0 0;
  background:
    linear-gradient(180deg, transparent 60px, #a9abad 160px, #c5c7c9 233px, #05080c 235px) left / 6px 100% no-repeat,
    linear-gradient(180deg, rgba(200, 200, 200, 0) 26px, rgba(190, 190, 190, 0.8) 54px, rgba(0, 0, 0, 0) 55px),
    linear-gradient(105deg, rgba(150, 152, 154, 0.8), rgba(90, 92, 94, 0.7) 100px, rgba(10, 14, 18, 0.4) 260px, rgba(10, 14, 18, 0.4) 78%, rgba(120, 124, 126, 0.8));
  backdrop-filter: blur(3px);
  display: flex;
  flex-direction: column;
  color: #1f3864;
}
.caret {
  display: block;
  width: 0;
  border: 3px solid transparent;
  border-top-color: currentColor;
  border-bottom: none;
}
.caret.big {
  border-width: 5px;
  border-bottom: none;
}
.caret.dim {
  color: #777;
}
.caret.black {
  color: #000;
}
.edsTitle {
  position: relative;
  height: 29px;
  padding-left: 1px;
  display: flex;
  align-items: center;
}
.edsLogo {
  margin-right: 4px;
}
.titleLine {
  width: 3px;
  height: 18px;
  border: 1px solid #8a94a6;
  background: #dde;
}
.company {
  margin: 0 26px 0 8px;
  padding: 0 2px;
  background: rgba(190, 192, 194, 0.5);
  box-shadow: 0 0 6px 3px rgba(190, 192, 194, 0.5);
  line-height: 14px;
}
.edsName {
  position: absolute;
  top: 5px;
  left: calc(50% + 8px);
  transform: translateX(-50%);
  background: rgba(180, 182, 184, 0.5);
  box-shadow: 0 0 8px 5px rgba(180, 182, 184, 0.5);
  font-family: 'Noto Sans CJK SC', sans-serif;
  line-height: 14px;
  color: #000;
}
.winBtns {
  position: relative;
  margin-left: auto;
  align-self: flex-start;
  display: flex;
  height: 19px;
  border: 1px solid #c5c7c9;
  border-top: none;
  border-radius: 0 0 5px 5px;
  overflow: hidden;
}
.winBtns button {
  width: 27px;
  display: flex;
  align-items: center;
  justify-content: center;
  border-right: 1px solid #c5c7c9;
  background: linear-gradient(#999c9e, #5c6062 50%, #3c4042 51%, #6c7072);
}
.winBtns .red {
  width: 47px;
  border-right: none;
  background: linear-gradient(#e0a090, #c9503c 50%, #b02a10 51%, #d8593a);
}
.ribbonTabs {
  height: 24px;
  display: flex;
  justify-content: space-between;
}
.sysTab {
  width: 57px;
  border: 1px solid #c8401a;
  border-bottom: none;
  border-radius: 3px 3px 0 0;
  background: linear-gradient(#f0693f, #f47a45 60%, #fba04e);
  color: #fff;
}
.styleBtn {
  display: flex;
  align-items: center;
  gap: 11px;
  margin-right: 6px;
  font: 11px/14px 'Liberation Mono', monospace;
}
.styleBtn span {
  background: rgba(200, 202, 204, 0.4);
  box-shadow: 0 0 5px 2px rgba(200, 202, 204, 0.4);
}
.edsBody {
  flex: 1;
  min-height: 0;
  display: flex;
  border-top: 2px solid #e6ebf2;
  background: #bccde5;
}

/* 左侧 */
.rail {
  width: 56px;
  border-right: 1px solid #a5b8d3;
}
.menuBtn {
  width: 42px;
  height: 40px;
  margin: 0 6px;
  padding: 8px 10px 0;
  border-bottom: 1px solid #7f99bd;
  display: flex;
  flex-direction: column;
  gap: 4px;
}
.menuBtn i {
  width: 100%;
  height: 3px;
  background: #1f3864;
}
.railBtn {
  width: 100%;
  height: 47px;
  border-bottom: 1px solid #9fb5d4;
  display: flex;
  align-items: center;
  justify-content: center;
}
.railBtn.light {
  height: 43px;
  background: #cedcef;
}
.lib {
  width: 122px;
  display: flex;
  flex-direction: column;
  background: #f0f0f0;
  border-right: 1px solid #8fa5c5;
}
.libHead {
  height: 37px;
  padding: 2px 9px 0 8px;
  display: flex;
  align-items: center;
  background: #eff5fd;
  border-bottom: 1px solid #a5b8d3;
  font-weight: 500;
  fill: #1f3864;
}
.libHead span {
  flex: 1;
}
.libHead svg + svg {
  margin-left: 18px;
}
.libList {
  flex: 1;
  width: 117px;
  border: 1px solid #7b93b8;
  border-left: none;
  background: #fff;
}
.libCate {
  width: 100%;
  height: 25px;
  padding-left: 3px;
  display: flex;
  align-items: center;
  border-bottom: 1px solid #7b93b8;
  background: linear-gradient(#e6effa, #d5e2f1);
}
.libCate.cur {
  background: linear-gradient(#ffd9a0, #ffb65c 45%, #ffb050 55%, #ffd98a);
}
.libCate span {
  flex: 1;
}
.libItem {
  width: 100%;
  margin-top: 2px;
  display: flex;
  flex-direction: column;
  align-items: center;
}
.libItem + .libItem {
  margin-top: 9px;
}

/* 右侧工作区 */
.work {
  flex: 1;
  min-width: 0;
  display: flex;
  flex-direction: column;
  background: #eff5fd;
}
.docTabs {
  height: 33px;
  display: flex;
  align-items: center;
  justify-content: space-between;
  padding-right: 5px;
  border-bottom: 1px solid #a5b8d3;
  background: #bccde5;
}
.docTab {
  width: 129px;
  height: 33px;
  padding: 0 8px 4px 6px;
  display: flex;
  align-items: center;
  gap: 8px;
  border: 1px solid #a5b8d3;
  border-bottom: none;
  background: #eff5fd;
  font-size: 13px;
  color: #14284b;
}
.docTab button {
  margin-left: auto;
  display: flex;
}
.toolbar {
  height: 86px;
  padding: 1px 0 0 5px;
  display: flex;
  align-items: flex-start;
  gap: 15px;
  overflow: hidden;
  border-bottom: 1px solid #5d6f80;
  background: linear-gradient(#edf5fd, #d8e3f0);
}
.tool {
  flex: none;
  height: 62px;
  padding-top: 1px;
  display: flex;
  flex-direction: column;
  align-items: center;
  color: #1f3864;
  fill: #1f3864;
  white-space: nowrap;
}
.tool.off {
  color: #9a9a9a;
  fill: #9a9a9a;
}
.tool .line {
  fill: none;
  stroke: currentColor;
  stroke-width: 2;
}
.tool span {
  margin-top: 4px;
}
.tool .caret {
  margin-top: 19px;
}
.xs {
  width: 24px;
}
.s {
  width: 42px;
}
.m {
  width: 48px;
}
.l {
  width: 60px;
}
.xl {
  width: 67px;
}
.switchBox {
  flex: none;
  width: 68px;
  padding-top: 6px;
  display: flex;
  flex-direction: column;
  align-items: center;
  white-space: nowrap;
  line-height: 17px;
}
.switch {
  width: 66px;
  height: 22px;
  margin-bottom: 5px;
  display: flex;
  align-items: center;
  border: 1px solid #8fa5c5;
  border-radius: 2px;
  background: #e9f0f9;
  color: #5d7089;
}
.switch i {
  width: 28px;
  height: 100%;
  border-right: 1px solid #8fa5c5;
  background: linear-gradient(#d5dfec, #b9c7da);
}
.switch b {
  flex: 1;
}

/* 分组框 */
.group {
  position: relative;
  border: 1px solid #5d6f80;
  border-radius: 6px 6px 0 0;
  background: #eff5fd;
  display: flex;
}
.caption {
  position: absolute;
  top: -10px;
  left: 50%;
  height: 20px;
  padding: 0 7px;
  transform: translateX(-50%);
  border: 1px solid #5d6f80;
  border-radius: 2px;
  background: linear-gradient(#f0f6fd, #d6e3f3);
  color: #1f3a8f;
  line-height: 15px;
  white-space: nowrap;
}
.topGroup {
  height: 122px;
  margin-top: 8px;
  padding: 11px 3px 2px 2px;
}
.mainGrid {
  flex: 1;
  min-width: 0;
  border: 1px solid #7b99c4;
  background: #fff;
  display: flex;
  flex-direction: column;
}
.gridClip {
  flex: 1;
  overflow: hidden;
}
.grid {
  width: 100%;
  table-layout: fixed;
  border-collapse: separate;
  border-spacing: 0;
  color: #000;
}
.gridClip .grid {
  width: 882px;
}
.grid th {
  height: 32px;
  padding: 0;
  border-right: 1px solid #7b99c4;
  border-bottom: 1px solid #7b99c4;
  background: linear-gradient(#f2f7fd, #dfeaf7);
  font-family: 'Noto Sans CJK SC', sans-serif;
  font-weight: normal;
  line-height: 16px;
  white-space: nowrap;
  overflow: hidden;
}
.grid td {
  height: 22px;
  padding: 0;
  border-right: 1px solid #c3d9f2;
  background: #afd3f8;
  white-space: nowrap;
  overflow: hidden;
}
.cMark {
  width: 34px;
}
.grid .corner {
  background: linear-gradient(135deg, transparent 50%, #3f84dd 50%) right 2px bottom 2px / 11px 11px no-repeat, linear-gradient(#f2f7fd, #dfeaf7);
}
.grid td.mark {
  padding-left: 4px;
  background: #c9ced6;
  border-bottom: 1px solid #7b99c4;
}
.mark i {
  display: block;
  width: 0;
  border: 4px solid transparent;
  border-left-color: #000;
  border-right: none;
}
.hScroll {
  height: 17px;
  padding: 1px 8px;
  display: flex;
  align-items: center;
  background: #f5f5f5;
}
.arrow {
  width: 0;
  border: 5px solid transparent;
}
.arrow.left {
  border-right-color: #444;
  border-left: none;
}
.arrow.right {
  border-left-color: #444;
  border-right: none;
}
.arrow.top {
  border-bottom-color: #444;
  border-top: none;
}
.thumb {
  display: flex;
  align-items: center;
  justify-content: center;
  border: 1px solid #92969c;
  border-radius: 2px;
}
.hScroll .thumb {
  flex: 1;
  height: 14px;
  margin: 0 24px 0 5px;
  background: linear-gradient(#f3f4f6, #e3e6ea);
}
.hScroll .thumb i {
  width: 8px;
  height: 8px;
  background: repeating-linear-gradient(90deg, #777 0 1px, transparent 1px 2px);
}
.mergeGrid {
  width: 202px;
  border: 1px solid #7b99c4;
  background: #fff;
}
.grid.small th {
  height: 21px;
}
.hSplit {
  height: 5px;
  display: flex;
  align-items: center;
  justify-content: center;
  gap: 10px;
  background: linear-gradient(#e6edf5, #7c8ba0 40%, #c5cfdb);
}
.up {
  width: 0;
  border: 3px solid transparent;
  border-top: none;
  border-bottom-color: #1f3a8f;
}
.grip {
  width: 36px;
  height: 2px;
  background: repeating-linear-gradient(90deg, #1f3a8f 0 2px, #fff 2px 4px);
}

/* 工艺流程 */
.lower {
  flex: 1;
  min-height: 0;
  display: flex;
  background: #eaf2fb;
}
.flowGroup {
  flex: 1;
  min-width: 0;
  margin-top: 9px;
  padding: 12px 3px 0 3px;
}
.sideTab {
  width: 26px;
  padding-top: 4px;
  background: linear-gradient(90deg, #d8e6fa, #c5dafa 19px, #3563a8 19px 20px, #8fb2ea 20px);
}
.sideTab span {
  display: block;
  width: 20px;
  height: 90px;
  padding-top: 10px;
  background: linear-gradient(90deg, #e6f0fd, #8fb2ea);
  clip-path: polygon(0 0, 100% 0, 100% 100%, 0 78%);
  writing-mode: vertical-rl;
  text-orientation: sideways;
  font-size: 13px;
  line-height: 20px;
  font-weight: bold;
  color: #000;
}
.nodePanel {
  width: 191px;
  border: 1px solid #4068ac;
  border-left: none;
  border-bottom: none;
  background: #fff;
}
.nodeHead {
  height: 34px;
  padding: 0 7px 0 15px;
  display: flex;
  align-items: center;
  justify-content: space-between;
  border-bottom: 1px solid #7b99c4;
  background: #f0f0f0;
}
.vSplit {
  width: 7px;
  padding-top: 128px;
  display: flex;
  flex-direction: column;
  align-items: center;
  justify-content: center;
  gap: 9px;
  background: linear-gradient(90deg, #eef3f9, #8592a5 80%, #5d6f80);
}
.vSplit.thin {
  width: 6px;
}
.lt {
  width: 0;
  border: 3px solid transparent;
  border-left: none;
  border-right-color: #1f3a8f;
}
.vgrip {
  width: 2px;
  height: 34px;
  background: repeating-linear-gradient(#1f3a8f 0 2px, #fff 2px 4px);
}
.treeBox {
  flex: 1;
  min-width: 0;
  display: flex;
  border-top: 1px solid #7b99c4;
  border-right: 1px solid #7b99c4;
  background: #fff;
}
.treeMain {
  flex: 1;
  min-width: 0;
  overflow: hidden;
  display: flex;
  flex-direction: column;
}
.tree {
  width: 100%;
  table-layout: fixed;
  border-collapse: separate;
  border-spacing: 0;
  color: #000;
}
.t1 {
  width: 155px;
}
.t2 {
  width: 55px;
}
.t3 {
  width: 75px;
}
.tree th {
  height: 18px;
  padding: 0 0 0 7px;
  border-right: 1px solid #9db5d8;
  border-bottom: 1px solid #9db5d8;
  background: linear-gradient(#f2f7fd, #dfeaf7);
  font-weight: normal;
  line-height: 17px;
  text-align: left;
  white-space: nowrap;
  overflow: hidden;
}
.tree th:first-child {
  padding-left: 0;
}
.tree th:nth-child(2) {
  padding: 0;
  text-align: center;
}
.tree td {
  height: 19px;
  padding: 0 0 0 6px;
  border-right: 1px solid #d5d5d5;
  white-space: nowrap;
  overflow: hidden;
}
.tree td:first-child {
  padding-left: 0;
}
.tree th:last-child,
.tree td:last-child {
  border-right: none;
}
.treeClip {
  flex: 1;
  min-height: 0;
  overflow: hidden;
}
.treeRows {
  margin-top: -11px;
}
.node {
  display: flex;
  align-items: center;
  gap: 3px;
  height: 19px;
}
.dot {
  stroke: #555;
  stroke-dasharray: 1 1;
}
.vScroll {
  width: 16px;
  display: flex;
  flex-direction: column;
  align-items: center;
  padding-top: 6px;
  background: #f7f7f7;
}
.vScroll .thumb {
  width: 14px;
  flex: 1;
  margin-top: 59px;
  align-items: flex-start;
  border-bottom: none;
  background: linear-gradient(90deg, #f3f4f6, #dfe2e6);
}
.vScroll .thumb i {
  width: 9px;
  height: 7px;
  margin-top: 134px;
  background: repeating-linear-gradient(#777 0 1px, transparent 1px 2px);
}
.vScroll.tall .thumb {
  margin-top: 163px;
}
.vScroll.tall .thumb i {
  margin-top: 54px;
}

/* 基本信息 */
.info {
  width: 484px;
  display: flex;
  flex-direction: column;
}
.infoTabs {
  height: 27px;
  padding-right: 5px;
  display: flex;
  align-items: center;
  background: linear-gradient(#c3d3ea, #dce7f3);
}
.infoTabs button {
  height: 100%;
  padding: 0 9px;
  color: #000;
}
.infoTabs button.cur {
  width: 69px;
  padding: 0;
  border: 1px solid #1a4c9c;
  background:
    conic-gradient(from 135deg at 50% 0, #fff 90deg, transparent 0) center bottom / 12px 6px no-repeat,
    radial-gradient(#4a90e8, #1f62c0);
  color: #fff;
  font-size: 13px;
  font-weight: bold;
}
.infoTabs button + button + button {
  padding: 0 14px;
}
.infoTabs .caret {
  margin-left: auto;
}
.infoBody {
  flex: 1;
  min-height: 0;
  display: flex;
}
.params {
  flex: 1;
  min-width: 0;
  display: flex;
  flex-direction: column;
  border-left: 1px solid #3563a8;
  border-right: 1px solid #3563a8;
}
.subTabs {
  height: 28px;
  padding-top: 2px;
  display: flex;
  align-items: flex-start;
  border-bottom: 5px solid #8fb2ea;
  background: linear-gradient(#cfe0fb, #fbfdff);
  overflow: hidden;
}
.subTabs svg {
  margin-left: 4px;
}
.subTabs button {
  height: 22px;
  padding: 0 12px 0 6px;
  border: 1px solid #3563a8;
  border-left: none;
  border-bottom: none;
  border-radius: 0 3px 0 0;
  background: linear-gradient(#cfe0f9, #9dbef0);
  color: #000;
  font-size: 13px;
  font-weight: bold;
  white-space: nowrap;
}
.paramGrid {
  flex: 1;
  min-height: 0;
  display: flex;
  border-left: 1px solid #8fb2ea;
  background: #fff;
}
.paramMain {
  flex: 1;
  min-width: 0;
  overflow: hidden;
}
.p0 {
  width: 34px;
}
.p1 {
  width: 142px;
}
.p2 {
  width: 177px;
}
.pHead {
  position: relative;
  z-index: 1;
}
.pRows {
  margin-top: -18px;
}
.pRows td {
  height: 22px;
  line-height: 20px;
  border-bottom: 1px solid #b5cdee;
  background: #fff;
}
.pRows td:nth-child(2) {
  background: #eaf2fc;
}
.pRows tr:nth-child(even) td {
  background: #f3f3f3;
}
.pRows td:first-child,
.pRows tr:nth-child(even) td:first-child {
  border-color: #7b99c4;
  background: linear-gradient(90deg, #dce8f5 60%, #b9cbe2);
}
.remark {
  width: 99px;
  display: flex;
  flex-direction: column;
}
.remark .subTabs button {
  width: 62px;
  padding: 0 12px 0 2px;
  margin-right: 10px;
  display: flex;
  align-items: center;
  justify-content: flex-end;
  overflow: hidden;
}
.remark .subTabs .arrow {
  margin: 5px 9px 0 0;
}
.remarkHead {
  height: 25px;
  padding-left: 2px;
  border-bottom: 1px solid #5d6f80;
  background: linear-gradient(#f2f7fd, #d6e3f3);
  color: #1f3a8f;
  line-height: 24px;
}
textarea {
  flex: 1;
  padding: 1px 0 0 2px;
  resize: none;
  background: #f0f0f0;
  color: #000;
  line-height: 12px;
  overflow: hidden;
}
</style>
